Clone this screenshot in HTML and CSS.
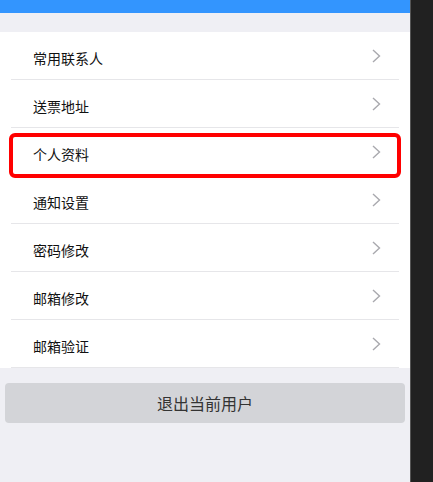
FILE: index.html
```html
<!DOCTYPE html>
<html lang="zh-CN">
<head>
    <meta charset="UTF-8">
    <title>设置</title>
    <link rel="stylesheet" href="styles.css">
</head>
<body>

<div class="screen">
    <div class="phone">
        <div class="topbar"></div>

        <ul class="menu">
            <li class="item"><span>常用联系人</span><svg class="arrow" viewBox="0 0 9 14"><polyline points="1,1 7.5,7 1,13"/></svg></li>
            <li class="item"><span>送票地址</span><svg class="arrow" viewBox="0 0 9 14"><polyline points="1,1 7.5,7 1,13"/></svg></li>
            <li class="item current"><span>个人资料</span><svg class="arrow" viewBox="0 0 9 14"><polyline points="1,1 7.5,7 1,13"/></svg></li>
            <li class="item"><span>通知设置</span><svg class="arrow" viewBox="0 0 9 14"><polyline points="1,1 7.5,7 1,13"/></svg></li>
            <li class="item"><span>密码修改</span><svg class="arrow" viewBox="0 0 9 14"><polyline points="1,1 7.5,7 1,13"/></svg></li>
            <li class="item"><span>邮箱修改</span><svg class="arrow" viewBox="0 0 9 14"><polyline points="1,1 7.5,7 1,13"/></svg></li>
            <li class="item"><span>邮箱验证</span><svg class="arrow" viewBox="0 0 9 14"><polyline points="1,1 7.5,7 1,13"/></svg></li>
        </ul>

        <button class="logout">退出当前用户</button>
    </div>
    <div class="side"></div>
</div>

</body>
</html>
```

FILE: styles.css
```css
html, body {
    margin: 0;
    padding: 0;
    height: 100%;
}
body {
    font-family: "Noto Sans CJK SC", "Noto Sans", sans-serif;
    color: #111;
}
.screen {
    display: flex;
    height: 100%;
}
.phone {
    width: 410px;
    background: #efeff4;
    display: flex;
    flex-direction: column;
}
.side {
    flex: 1;
    background: #212121;
    border-left: 1px solid #555;
}
.topbar {
    height: 13px;
    background: #3395fe;
    margin-bottom: 19px;
}
.menu {
    list-style: none;
    margin: 0;
    padding: 0;
    background: #fff;
}
.item {
    position: relative;
    height: 47px;
    margin: 0 11px;
    border-bottom: 1px solid #e6e6e9;
    display: flex;
    align-items: center;
    justify-content: space-between;
    font-size: 14px;
}
.item span {
    padding-left: 22px;
    padding-top: 5px;
}
.arrow {
    width: 9px;
    height: 14px;
    margin-right: 18px;
    fill: none;
    stroke: #a9a9ae;
    stroke-width: 1.4;
}
.current::after {
    content: "";
    position: absolute;
    left: -2px;
    right: -2px;
    top: 5px;
    bottom: -3px;
    border: 4px solid #ff0000;
    border-radius: 6px;
}
.logout {
    margin: 15px 5px 0;
    height: 40px;
    border: none;
    border-radius: 4px;
    background: #d3d4d8;
    color: #333;
    font-family: inherit;
    font-size: 16px;
}
```
